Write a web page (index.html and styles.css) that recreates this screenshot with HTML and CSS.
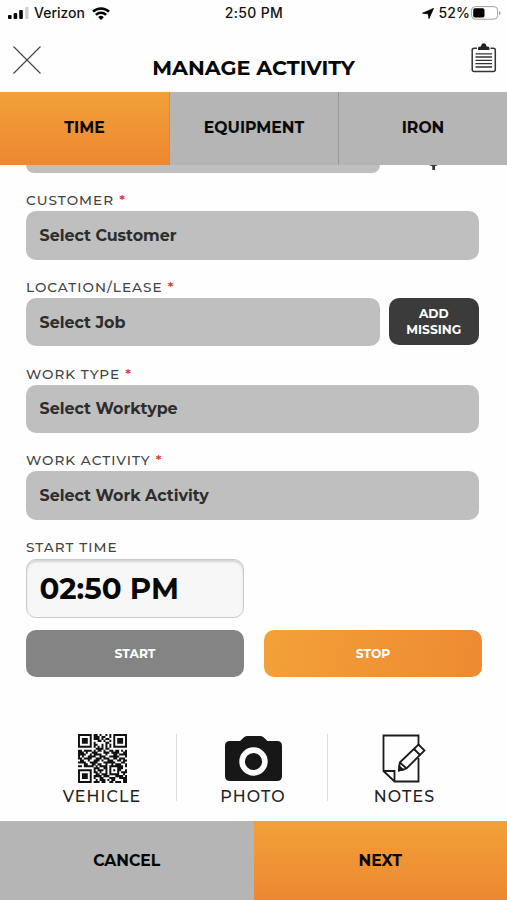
FILE: index.html
```html
<!DOCTYPE html>
<html lang="en">
<head>
<meta charset="utf-8">
<title>Manage Activity</title>
<link rel="stylesheet" href="styles.css">
</head>
<body>
<div class="app">
  <div class="status">
    <div class="status-left">
      <svg class="signal" viewBox="0 0 21 12" width="21" height="12"><rect x="0" y="8" width="3.6" height="4" rx="1"/><rect x="5.6" y="6" width="3.6" height="6" rx="1"/><rect x="11.2" y="3" width="3.6" height="9" rx="1"/><rect x="17" y="0" width="3.6" height="12" rx="1" fill="#d3d3d3"/></svg>
      <span class="carrier">Verizon</span>
      <svg class="wifi" viewBox="0 0 18 13" width="18" height="13" fill="none" stroke="#000" stroke-width="2.5"><path d="M1 4.700a11.400 11.400 0 0 1 16 0M3.900 7.900a7.200 7.200 0 0 1 10.200 0"/><path d="M9 13 6.200 10.200a4 4 0 0 1 5.600 0z" fill="#000" stroke="none"/></svg>
    </div>
    <span class="clock">2:50 PM</span>
    <div class="status-right">
      <svg viewBox="0 0 12 11" width="12" height="11"><path d="M11.500.4 7 10.600 6.200 5.800.6 5.200z" stroke="#000" stroke-width=".8" stroke-linejoin="round"/></svg>
      <span class="percent">52%</span>
      <svg viewBox="0 0 30 14" width="30" height="14"><rect x=".6" y=".6" width="26" height="12.600" rx="3.600" fill="#fff" stroke="#a0a0a0"/><rect x="2.200" y="2.200" width="11.300" height="9.400" rx="1.800"/><path d="M28 5v4q1.500-.6 1.500-2T28 5z" fill="#999"/></svg>
    </div>
  </div>
  <header class="header">
    <svg class="close" viewBox="0 0 28 28" width="28" height="28"><path d="M.5.5l27 27M27.500.5l-27 27" stroke="#444" stroke-width="1.100"/></svg>
    <h1 class="title">MANAGE ACTIVITY</h1>
    <svg class="clipboard" viewBox="0 0 26 30" width="26" height="30"><path d="M6 5.200H3.200Q1.200 5.200 1.200 7.200V26.500Q1.200 28.500 3.200 28.500H22.300Q24.300 28.500 24.300 26.500V7.200Q24.300 5.200 22.300 5.200H19.500" fill="none" stroke="#333" stroke-width="1.500"/><path d="M7 7V5.500Q7 3.500 9 3.500H10Q10.500.2 12.750.2T15.500 3.500H16.500Q18.500 3.500 18.500 5.500V7z" fill="#222"/><path d="M4.500 10.800h16.600M4.500 14h16.600M4.500 17.300h16.600M4.500 20.600h16.600M4.500 24h16.600" stroke="#333" stroke-width="1.300"/></svg>
  </header>
  <nav class="tabs">
    <div class="tab tab-active">TIME</div>
    <div class="tab">EQUIPMENT</div>
    <div class="tab">IRON</div>
  </nav>
  <main class="form">
    <div class="row peek"><div class="select select-cut"></div><svg class="stem" viewBox="0 0 9 5" width="9" height="5"><path d="M0 0h9L6 1.300V5H3.300V1.300z" fill="#333"/></svg></div>
    <div class="field"><div class="label">CUSTOMER<i>*</i></div><div class="select">Select Customer</div></div>
    <div class="field"><div class="label">LOCATION/LEASE<i>*</i></div>
      <div class="row"><div class="select">Select Job</div><div class="add">ADD<br>MISSING</div></div></div>
    <div class="field"><div class="label">WORK TYPE<i>*</i></div><div class="select">Select Worktype</div></div>
    <div class="field"><div class="label">WORK ACTIVITY<i>*</i></div><div class="select">Select Work Activity</div></div>
    <div class="label">START TIME</div>
    <div class="time">02:50 PM</div>
    <div class="buttons"><div class="button">START</div><div class="button stop">STOP</div></div>
  </main>
  <section class="tools">
    <div class="tool"><svg id="qr" class="qr" viewBox="0 0 25 25" width="49" height="49" stroke="#111" stroke-width="1.040"></svg><span>VEHICLE</span></div>
    <div class="tool"><svg viewBox="0 0 57 49" width="57" height="49"><path d="M5 7H15L19 3.300Q20.500 2 22.500 2H35Q37 2 38.500 3.300L42.500 7H52Q57 7 57 12V42Q57 47 52 47H5Q0 47 0 42V12Q0 7 5 7z" fill="#171717"/><circle cx="28.500" cy="27.500" r="11.400" fill="#171717" stroke="#fff" stroke-width="5.600"/></svg><span>PHOTO</span></div>
    <div class="tool"><svg class="note" viewBox="0 0 44 49" width="44" height="49" fill="none" stroke="#1b1b1b" stroke-width="1.800"><path d="M36.500 12V1.500H1.500V37L12.500 47.500H36.500V24M2 37H12.500V47"/><path d="M17.800 28.500 36.500 10.500 42.500 16.500 24.500 34.500 17 36.500z" fill="#fff"/><path d="M32 15 38 21M18 28.500l6.500 6"/><path d="m17.300 32.500 3.600 3.300-3.900.7z" fill="#1b1b1b"/></svg><span>NOTES</span></div>
  </section>
  <footer class="footer"><div class="cancel">CANCEL</div><div class="next">NEXT</div></footer>
</div>
<script src="app.js"></script>
</body>
</html>
```
FILE: app.js
```js
const rows = [
  "1111111011010010101111111",
  "1000001011101100101000001",
  "1011101011101011001011101",
  "1011101000110100101011101",
  "1011101010000011001011101",
  "1000001011001010101000001",
  "1111111010101010101111111",
  "0000000001111011000000000",
  "1101111010110100110110101",
  "1110100111000111011110011",
  "1111001011110010001101111",
  "1010011110011100111110001",
  "1101111001110111001101110",
  "0110010011101001110011011",
  "1111001111000111111000110",
  "0001100110110010010111001",
  "1101111101011110111111101",
  "0000000011100110100011100",
  "1111111010111010101011001",
  "1000001011010010100010111",
  "1011101001101110111110010",
  "1011101011110111000111101",
  "1011101010011000111001111",
  "1000001001011101011000011",
  "1111111011101100110111011"
];
let d = "";
rows.forEach((row, y) => {
  for (const run of row.matchAll(/1+/g)) d += `M${run.index} ${y + 0.5}h${run[0].length}`;
});
const path = document.createElementNS("http://www.w3.org/2000/svg", "path");
path.setAttribute("d", d);
document.getElementById("qr").appendChild(path);
```
FILE: styles.css
```css
* { box-sizing: border-box; }
body { margin: 0; background: #fefefe; color: #080808; font-family: Montserrat, Inter, "Open Sans", sans-serif; }
svg { display: block; flex: none; }
.app { width: 507px; height: 900px; display: flex; flex-direction: column; overflow: hidden; white-space: nowrap; }
.status { height: 26px; display: grid; grid-template-columns: 1fr auto 1fr; align-items: center; padding: 0 7px 0 8px; font: 500 14px/26px Inter, sans-serif; color: #111; }
.status-left { display: flex; align-items: center; }
.carrier { margin: 0 7px 0 5px; }
.clock { letter-spacing: .35px; }
.status-right { display: flex; align-items: center; justify-content: flex-end; margin-right: -1px; }
.percent { margin: 0 1px 0 5px; letter-spacing: .1px; }
.header { height: 65.500px; display: grid; grid-template-columns: 1fr auto 1fr; align-items: start; padding: 0 10px 0 13px; }
.close { margin-top: 20px; }
.title { margin: 30px 0 0 -3px; font-size: 20.800px; font-weight: 700; line-height: 24px; }
.clipboard { margin-top: 17px; justify-self: end; }
.tabs { height: 73px; display: grid; grid-template-columns: repeat(3, 1fr); flex: none; }
.tab { background: #b5b5b5; border-left: 1px solid #999; display: flex; align-items: center; justify-content: center; padding-bottom: 2px; font-size: 15.700px; font-weight: 700; }
.tab-active { background: linear-gradient(#f1a138, #ee8732); border-left: 0; }
.form { padding: 0 28px 0 26px; height: 548.500px; flex: none; }
.row { display: flex; gap: 9px; }
.select { flex: 1; height: 48.500px; border-radius: 10px; background: #bfbfbf; display: flex; align-items: center; padding-left: 13.500px; font-size: 15.900px; font-weight: 700; color: #2d2d2d; }
.peek { height: 26.500px; }
.select-cut { height: 8.500px; flex: none; width: 353.500px; border-radius: 0 0 10px 10px; }
.stem { margin-left: 40.500px; }
.field { height: 86.750px; }
.label { height: 20px; line-height: 18px; font-size: 13.600px; font-weight: 500; color: #444; letter-spacing: 1.020px; display: flex; }
.label i { color: #e33b2e; font-style: normal; font-weight: 600; margin-left: 5px; }
.add { width: 90.500px; height: 47.500px; border-radius: 10px; background: #3b3b3b; color: #fff; font-size: 12.300px; line-height: 16px; font-weight: 700; text-align: center; padding-top: 8.500px; }
.time { width: 218px; height: 59px; margin-top: 1px; border: 1.500px solid #cbcbcb; border-radius: 10px; background: #f7f7f7; box-shadow: inset 0 2px 2px #d4d4d4; padding-left: 12.500px; display: flex; align-items: center; font-size: 29.300px; font-weight: 700; }
.buttons { display: flex; gap: 20px; width: 456px; margin-top: 12px; }
.button { flex: 1; height: 47px; border-radius: 10px; background: #848484; color: #fff; display: flex; align-items: center; justify-content: center; font-size: 12.300px; font-weight: 700; }
.stop { background: linear-gradient(100deg, #f2a138, #ee8a32); }
.tools { height: 108px; display: grid; grid-template-columns: 151px 151px 151px; padding: 20.500px 0 0 26px; flex: none; }
.tool { height: 67px; display: flex; flex-direction: column; align-items: center; font-size: 15.900px; font-weight: 500; line-height: 20px; letter-spacing: 1.100px; color: #222; border-right: 1px solid #dedede; padding-left: 2px; }
.tool:last-child { border: 0; }
.tool span { margin-top: 4px; }
.note { margin-right: 2px; }
.footer { flex: 1; display: grid; grid-template-columns: 1fr 1fr; font-size: 15.700px; font-weight: 700; }
.cancel, .next { display: flex; align-items: center; justify-content: center; padding-bottom: 1px; background: #b5b5b5; }
.next { background: linear-gradient(#f1a138, #ee8732); }
```
